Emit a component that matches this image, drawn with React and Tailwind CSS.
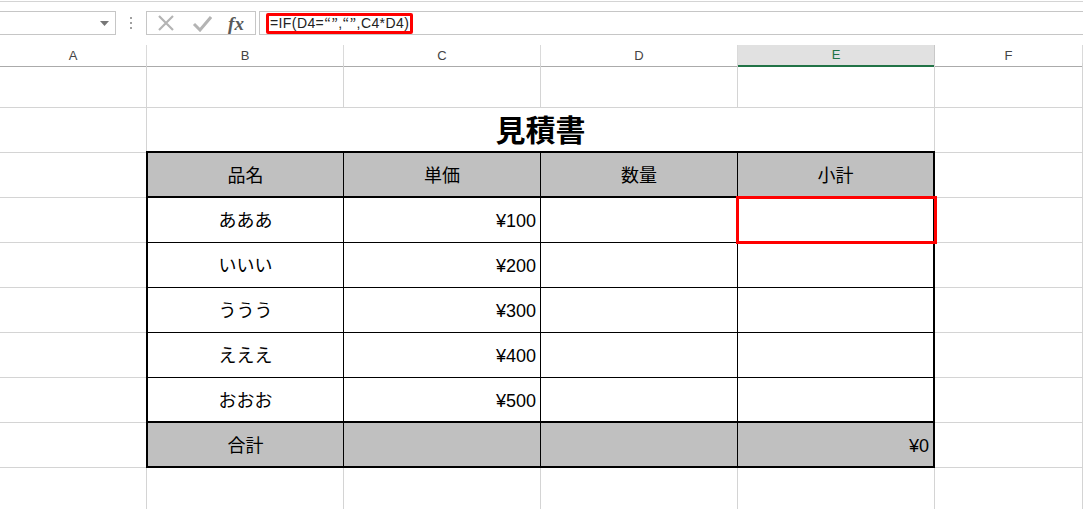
import React from "react";

const jp = { fontFamily: '"Liberation Sans", "Noto Sans CJK JP", sans-serif' };

function Toolbar() {
  return (
    <div className="h-[44px] border-t border-[#d4d4d4] mt-px flex items-start pt-[9px]">
      <div className="w-[116px] h-[24px] border border-l-0 border-[#c6c6c6] flex items-center justify-end pr-[6px]">
        <svg width="9" height="5" viewBox="0 0 9 5"><path d="M0 0 H9 L4.5 5 Z" fill="#777" /></svg>
      </div>
      <div className="w-[30px] h-[24px] flex flex-col items-center justify-center gap-[3px]">
        <span className="w-[2px] h-[2px] bg-[#a0a0a0]" />
        <span className="w-[2px] h-[2px] bg-[#a0a0a0]" />
        <span className="w-[2px] h-[2px] bg-[#a0a0a0]" />
      </div>
      <div className="w-[110px] h-[24px] border border-[#c6c6c6] flex items-center">
        <div className="w-[38px] flex justify-center">
          <svg width="18" height="18" viewBox="0 0 18 18"><path d="M2 2 L16 16 M16 2 L2 16" stroke="#b4b4b4" strokeWidth="2.2" /></svg>
        </div>
        <div className="w-[34px] flex justify-center">
          <svg width="20" height="18" viewBox="0 0 20 18"><path d="M2 10 L8 16 L19 3" stroke="#b4b4b4" strokeWidth="3" fill="none" /></svg>
        </div>
        <div className="w-[34px] flex justify-center text-[#595959] italic text-[19px] leading-none" style={{ fontFamily: '"Liberation Serif", serif' }}>
          <span className="font-semibold">fx</span>
        </div>
      </div>
      <div className="ml-[3px] flex-1 h-[24px] border border-r-0 border-[#c6c6c6] flex items-center pl-[6px]">
        <div className="h-[21px] border-[3px] border-[#ff0000] rounded-[2px] flex items-center px-[1px] text-[14px] text-[#222] leading-none tracking-[0.4px]" style={{ fontFamily: '"Liberation Sans", sans-serif' }}>
          <span>=IF(D4=</span>
          <span style={{ fontFamily: '"Noto Sans CJK JP", sans-serif' }}>&ldquo;&rdquo;</span>
          <span>,</span>
          <span style={{ fontFamily: '"Noto Sans CJK JP", sans-serif' }}>&ldquo;&rdquo;</span>
          <span>,C4*D4)</span>
        </div>
      </div>
    </div>
  );
}

function ColHeaders() {
  const cols = ["A", "B", "C", "D", "E", "F"];
  return (
    <div className="grid grid-cols-[147px_197px_197px_197px_197px_1fr] h-[18px]" style={{ fontFamily: '"Liberation Sans", sans-serif' }}>
      {cols.map((c) =>
        c === "E" ? (
          <div key={c} className="bg-[#e1e1e1] border-b-2 border-[#217346] border-r border-r-[#c8c8c8] flex items-center justify-center text-[13px] text-[#217346]">
            {c}
          </div>
        ) : (
          <div key={c} className="border-b border-[#ababab] border-r border-r-[#dadada] flex items-center justify-center text-[13px] text-[#444]">
            {c}
          </div>
        )
      )}
    </div>
  );
}

const g = "border-r border-b border-[#d4d4d4] h-[45px]";

function Table() {
  const items = [
    ["あああ", "¥100"],
    ["いいい", "¥200"],
    ["ううう", "¥300"],
    ["えええ", "¥400"],
    ["おおお", "¥500"],
  ];
  return (
    <div className="col-start-2 col-end-6 row-start-3 row-end-10 -ml-px -mt-[2px] border-2 border-black bg-white flex flex-col text-[18px] text-black" style={jp}>
      <div className="grid grid-cols-[196px_197px_197px_1fr] h-[45px] border-b-2 border-black bg-[#c0c0c0]">
        {["品名", "単価", "数量", "小計"].map((t, i) => (
          <div key={t} className={`flex items-center justify-center pt-[3px] ${i < 3 ? "border-r border-black" : ""}`}>{t}</div>
        ))}
      </div>
      {items.map(([n, p], idx) => (
        <div key={n} className={`grid grid-cols-[196px_197px_197px_1fr] h-[45px] border-black ${idx === 4 ? "border-b-2" : "border-b"}`}>
          <div className="flex items-center justify-center pt-[3px] border-r border-black">{n}</div>
          <div className="flex items-center justify-end pt-[3px] pr-[4px] border-r border-black">{p}</div>
          <div className="border-r border-black" />
          <div className="relative">
            {idx === 0 && (
              <div className="absolute -left-[2px] -top-[2px] -right-[4px] -bottom-[2px] border-[3px] border-[#ff0000]" />
            )}
          </div>
        </div>
      ))}
      <div className="grid grid-cols-[196px_197px_197px_1fr] flex-1 bg-[#c0c0c0]">
        <div className="flex items-center justify-center pt-[3px] border-r border-black">合計</div>
        <div className="border-r border-black" />
        <div className="border-r border-black" />
        <div className="flex items-center justify-end pt-[3px] pr-[4px]">¥0</div>
      </div>
    </div>
  );
}

export default function App() {
  return (
    <div className="w-[1083px] h-[509px] overflow-hidden bg-white">
      <Toolbar />
      <ColHeaders />
      <div className="grid grid-cols-[147px_197px_197px_197px_197px_1fr] grid-rows-[repeat(10,45px)]">
        {[0, 1, 2, 3, 4, 5].map((i) => (
          <div key={"r1" + i} className={g} />
        ))}
        <div className={g} />
        <div className="col-start-2 col-end-6 border-r border-[#d4d4d4] h-[45px] flex items-center justify-center text-[30px] font-bold text-black" style={jp}>
          見積書
        </div>
        <div className={g} />
        {[3, 4, 5, 6, 7, 8, 9].map((r) => (
          <React.Fragment key={"r" + r}>
            <div className={`${g} col-start-1`} style={{ gridRow: r }} />
            <div className={`${g} col-start-6`} style={{ gridRow: r }} />
          </React.Fragment>
        ))}
        <Table />
        {[1, 2, 3, 4, 5, 6].map((c) => (
          <div key={"r10" + c} className={g} style={{ gridRow: 10, gridColumn: c }} />
        ))}
      </div>
    </div>
  );
}
